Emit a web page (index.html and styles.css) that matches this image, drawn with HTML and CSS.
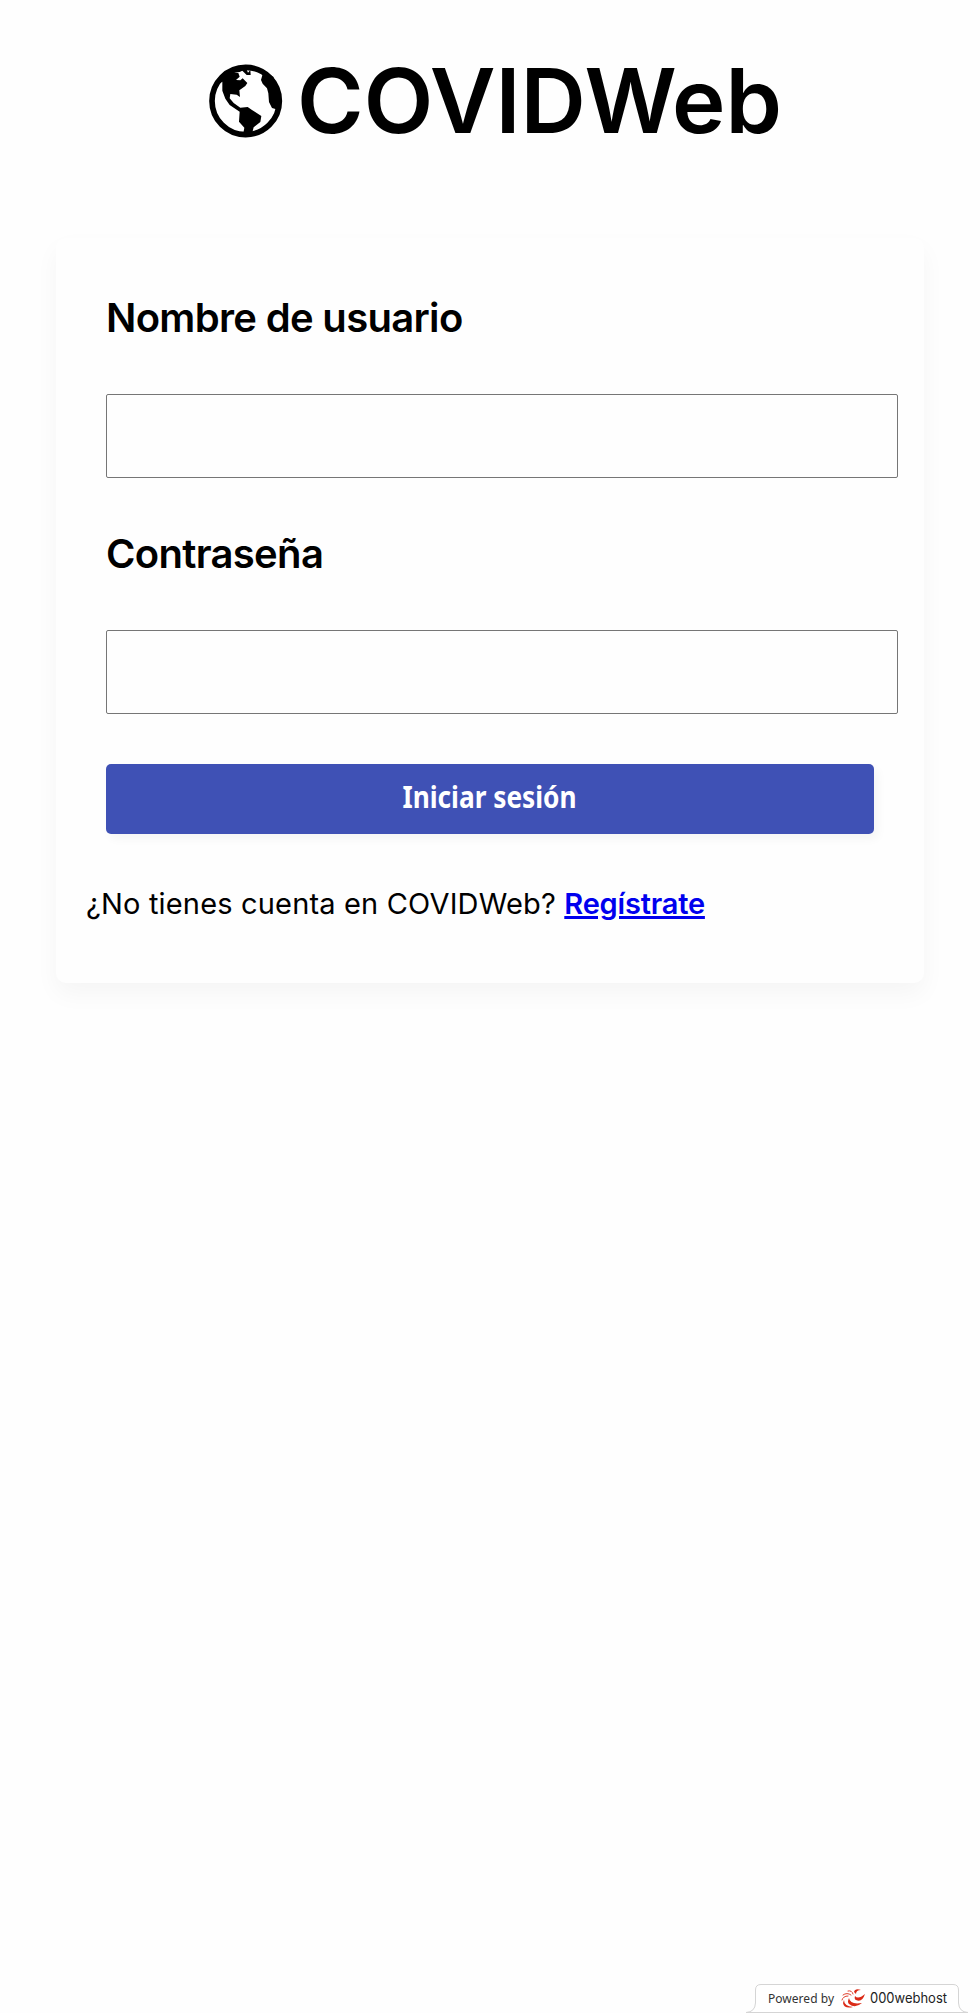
FILE: index.html
```html
<!DOCTYPE html>
<html lang="es">
<head>
<meta charset="utf-8">
<title>COVIDWeb</title>
<link rel="stylesheet" href="styles.css">
</head>
<body>
<header class="header">
<svg class="logo" width="620" height="130" viewBox="200 35 620 130" role="img" aria-label="COVIDWeb">
<g transform="translate(190 50) scale(.33333)">
<circle cx="167" cy="153" r="101" fill="#fff" stroke="#000" stroke-width="17"/>
<path d="M78 106 L112 62 L150 54 L167 52 L174 68 L181 60 L182 75 L170 75 L157 62 L149 66 L132 68 L145 69 L149 80 L138 90 L151 91 L158 85 L172 99 L166 108 L148 121 L150 141 L140 134 L121 132 L119 145 L131 159 L151 173 L173 171 L186 180 L214 198 L211 216 L191 232 L185 255 L159 255 L163 233 L147 215 L149 185 L119 165 L106 146 L97 122 L97 95 Z"/>
<path d="M207 56 L218 72 L213 90 L218 101 L231 115 L235 130 L237 156 L246 174 L264 179 L272 130 L250 80 Z"/>
</g>
<text class="logo-text" x="297" y="133" textLength="485" lengthAdjust="spacingAndGlyphs">COVIDWeb</text>
</svg>
</header>
<main class="card">
<form class="form">
<label class="label" for="user">Nombre de usuario</label>
<input class="field" id="user" type="text">
<label class="label label-pass" for="pass">Contraseña</label>
<input class="field" id="pass" type="password">
<button class="submit" type="button"><span class="submit-text">Iniciar sesión</span></button>
</form>
<p class="signup">¿No tienes cuenta en COVIDWeb? <a class="link" href="#">Regístrate</a></p>
</main>
<footer class="footer">
<svg width="240" height="33" viewBox="740 1980 240 33">
<path d="M746 2012.500Q755 2012 755.500 2003V1990Q755.500 1984.500 761 1984.500H953Q958.500 1984.500 958.500 1990V2003Q959 2012 968 2012.500" fill="#fff" stroke="#d5d5d5"/>
<path d="M746 2012.500H968" stroke="#d5d5d5"/>
<text class="powered" x="768" y="2003" textLength="66">Powered by</text>
<g fill="#db2a17">
<path d="M855 1996Q858 2000 865 1994Q862 2003 856 2000Q854 1999 855 1996Z"/>
<path d="M849 1998Q850 2005 862 2003Q855 2009 849 2004Q847 2002 849 1998Z"/>
<path d="M844 2000Q844 2006 853 2007Q844 2009 843 2003Z"/>
<path d="M856 1994Q856 1990 861 1990Q855 1988 854 1992Z"/>
</g>
<g fill="none" stroke="#e0402e" stroke-linecap="round">
<path d="M842 2000Q843 1996 848 1996M843 1995Q847 1992 851 1995M848 1991Q852 1990 853 1994"/>
</g>
<text class="host" x="870" y="2003" textLength="77" lengthAdjust="spacingAndGlyphs">000webhost</text>
</svg>
</footer>
</body>
</html>
```
FILE: styles.css
```css
* { box-sizing: border-box; }
body { margin: 0; min-height: 2013px; display: flex; flex-direction: column; background: #fefefe; color: #000; font-family: Inter, sans-serif; }
.header { height: 238px; padding: 35px 0 0 200px; }
.logo { display: block; }
.logo-text { font: 600 89px Inter, sans-serif; }
.card { width: 868px; height: 745px; margin-left: 56px; padding: 50px 50px 0; border-radius: 10px; background: #fefefe; box-shadow: 0 11px 25px rgba(0, 0, 0, .04); }
.form { display: flex; flex-direction: column; width: 768px; }
.label { height: 60px; margin-bottom: 46px; line-height: 60px; font-size: 40px; font-weight: 600; letter-spacing: -.68px; white-space: nowrap; }
.label-pass { margin-top: 46px; }
.field { width: 792px; height: 84px; border: 1px solid #767676; border-radius: 2px; background: #fefefe; padding: 0 20px; font-size: 32px; }
.submit { height: 70px; margin-top: 50px; border: 0; border-radius: 5px; background: #3f51b5; color: #fff; box-shadow: 4px 5px 10px rgba(0, 0, 0, .04); padding: 0 0 4px; font: 700 30px/60px "Noto Sans", sans-serif; }
.submit-text { display: inline-block; transform: scaleX(.875); }
.signup { margin: 50px 0 0 -20px; line-height: 40px; font-size: 29px; letter-spacing: .17px; white-space: nowrap; }
.link { color: #00e; font-weight: 600; letter-spacing: -.2px; text-decoration-thickness: 3px; }
.footer { margin: auto 0 0 740px; height: 33px; }
.footer svg { display: block; }
.powered { font: 12px "Noto Sans", sans-serif; fill: #333; }
.host { font: 14px Inter, sans-serif; fill: #222; }
```
